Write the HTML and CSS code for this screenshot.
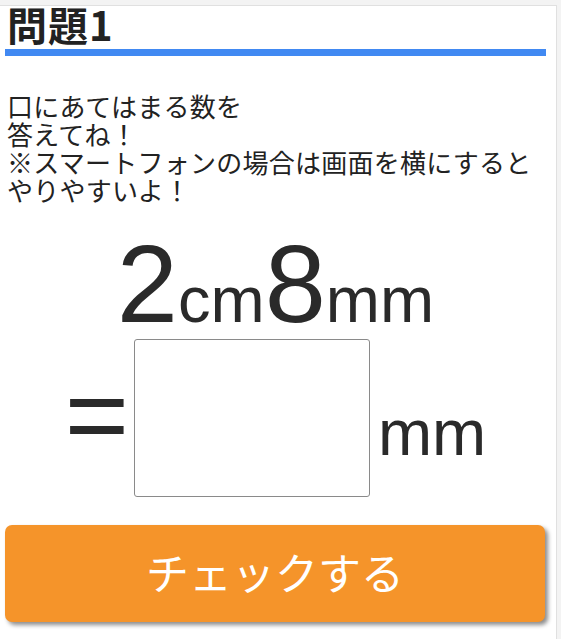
FILE: index.html
```html
<!DOCTYPE html>
<html lang="ja">
<head>
<meta charset="utf-8">
<title>問題1</title>
<link rel="stylesheet" href="styles.css">
</head>
<body>
<div class="card">
  <h1 class="title">問題1</h1>
  <p class="question">口にあてはまる数を<br>答えてね！<br>※スマートフォンの場合は画面を横にすると<br>やりやすいよ！</p>
  <div class="expr"><span class="num">2</span><span class="unit">cm</span><span class="num">8</span><span class="unit">mm</span></div>
  <div class="answer">
    <span class="eq">=</span>
    <input class="box" type="text" aria-label="答え">
    <span class="unit2">mm</span>
  </div>
  <button class="check" type="button">チェックする</button>
</div>
</body>
</html>
```

FILE: styles.css
```css
html, body {
  margin: 0;
  padding: 0;
}
body {
  background: #f3f3f3;
  font-family: "Noto Sans CJK JP", "Noto Sans", sans-serif;
  color: #222;
}
.card {
  margin-top: 5px;
  width: 541px;
  min-height: 633px;
  background: #fff;
  border-top: 1px solid #e0e0e0;
  border-right: 1px solid #e0e0e0;
  padding: 0 10px 0 5px;
}
.title {
  margin: 0;
  font-size: 40px;
  font-weight: bold;
  line-height: 36px;
  letter-spacing: 1px;
  padding: 0 0 7px 2px;
  border-bottom: 7px solid #4189f2;
  color: #222;
}
.question {
  margin: 36px 0 0 2px;
  font-size: 26px;
  line-height: 28px;
  letter-spacing: 0.25px;
  color: #222;
}
.expr {
  margin-top: 25px;
  text-align: center;
  font-family: "Liberation Sans", Arial, sans-serif;
  font-size: 110px;
  line-height: 110px;
  height: 110px;
  color: #2a2a2a;
}
.unit {
  font-size: 65px;
  line-height: 1;
}
.answer {
  display: flex;
  justify-content: center;
  align-items: flex-start;
  font-family: "Liberation Sans", Arial, sans-serif;
  color: #2a2a2a;
}
.eq {
  font-size: 110px;
  line-height: 1;
  margin-top: 20px;
}
.box {
  box-sizing: border-box;
  width: 236px;
  height: 158px;
  margin-left: 5px;
  border: 1px solid #8a8a8a;
  border-radius: 3px;
  background: #fff;
  padding: 0;
}
.unit2 {
  font-size: 65px;
  line-height: 1;
  margin-left: 8px;
  margin-top: 61px;
}
.check {
  display: flex;
  align-items: center;
  justify-content: center;
  box-sizing: border-box;
  width: 540px;
  height: 97px;
  margin-top: 28px;
  border: none;
  border-radius: 7px;
  background: #f5942a;
  color: #fff;
  font-family: "Noto Sans CJK JP", sans-serif;
  font-size: 43px;
  box-shadow: 3px 3px 4px rgba(0, 0, 0, 0.45);
  padding: 0 0 6px 0;
}
```
